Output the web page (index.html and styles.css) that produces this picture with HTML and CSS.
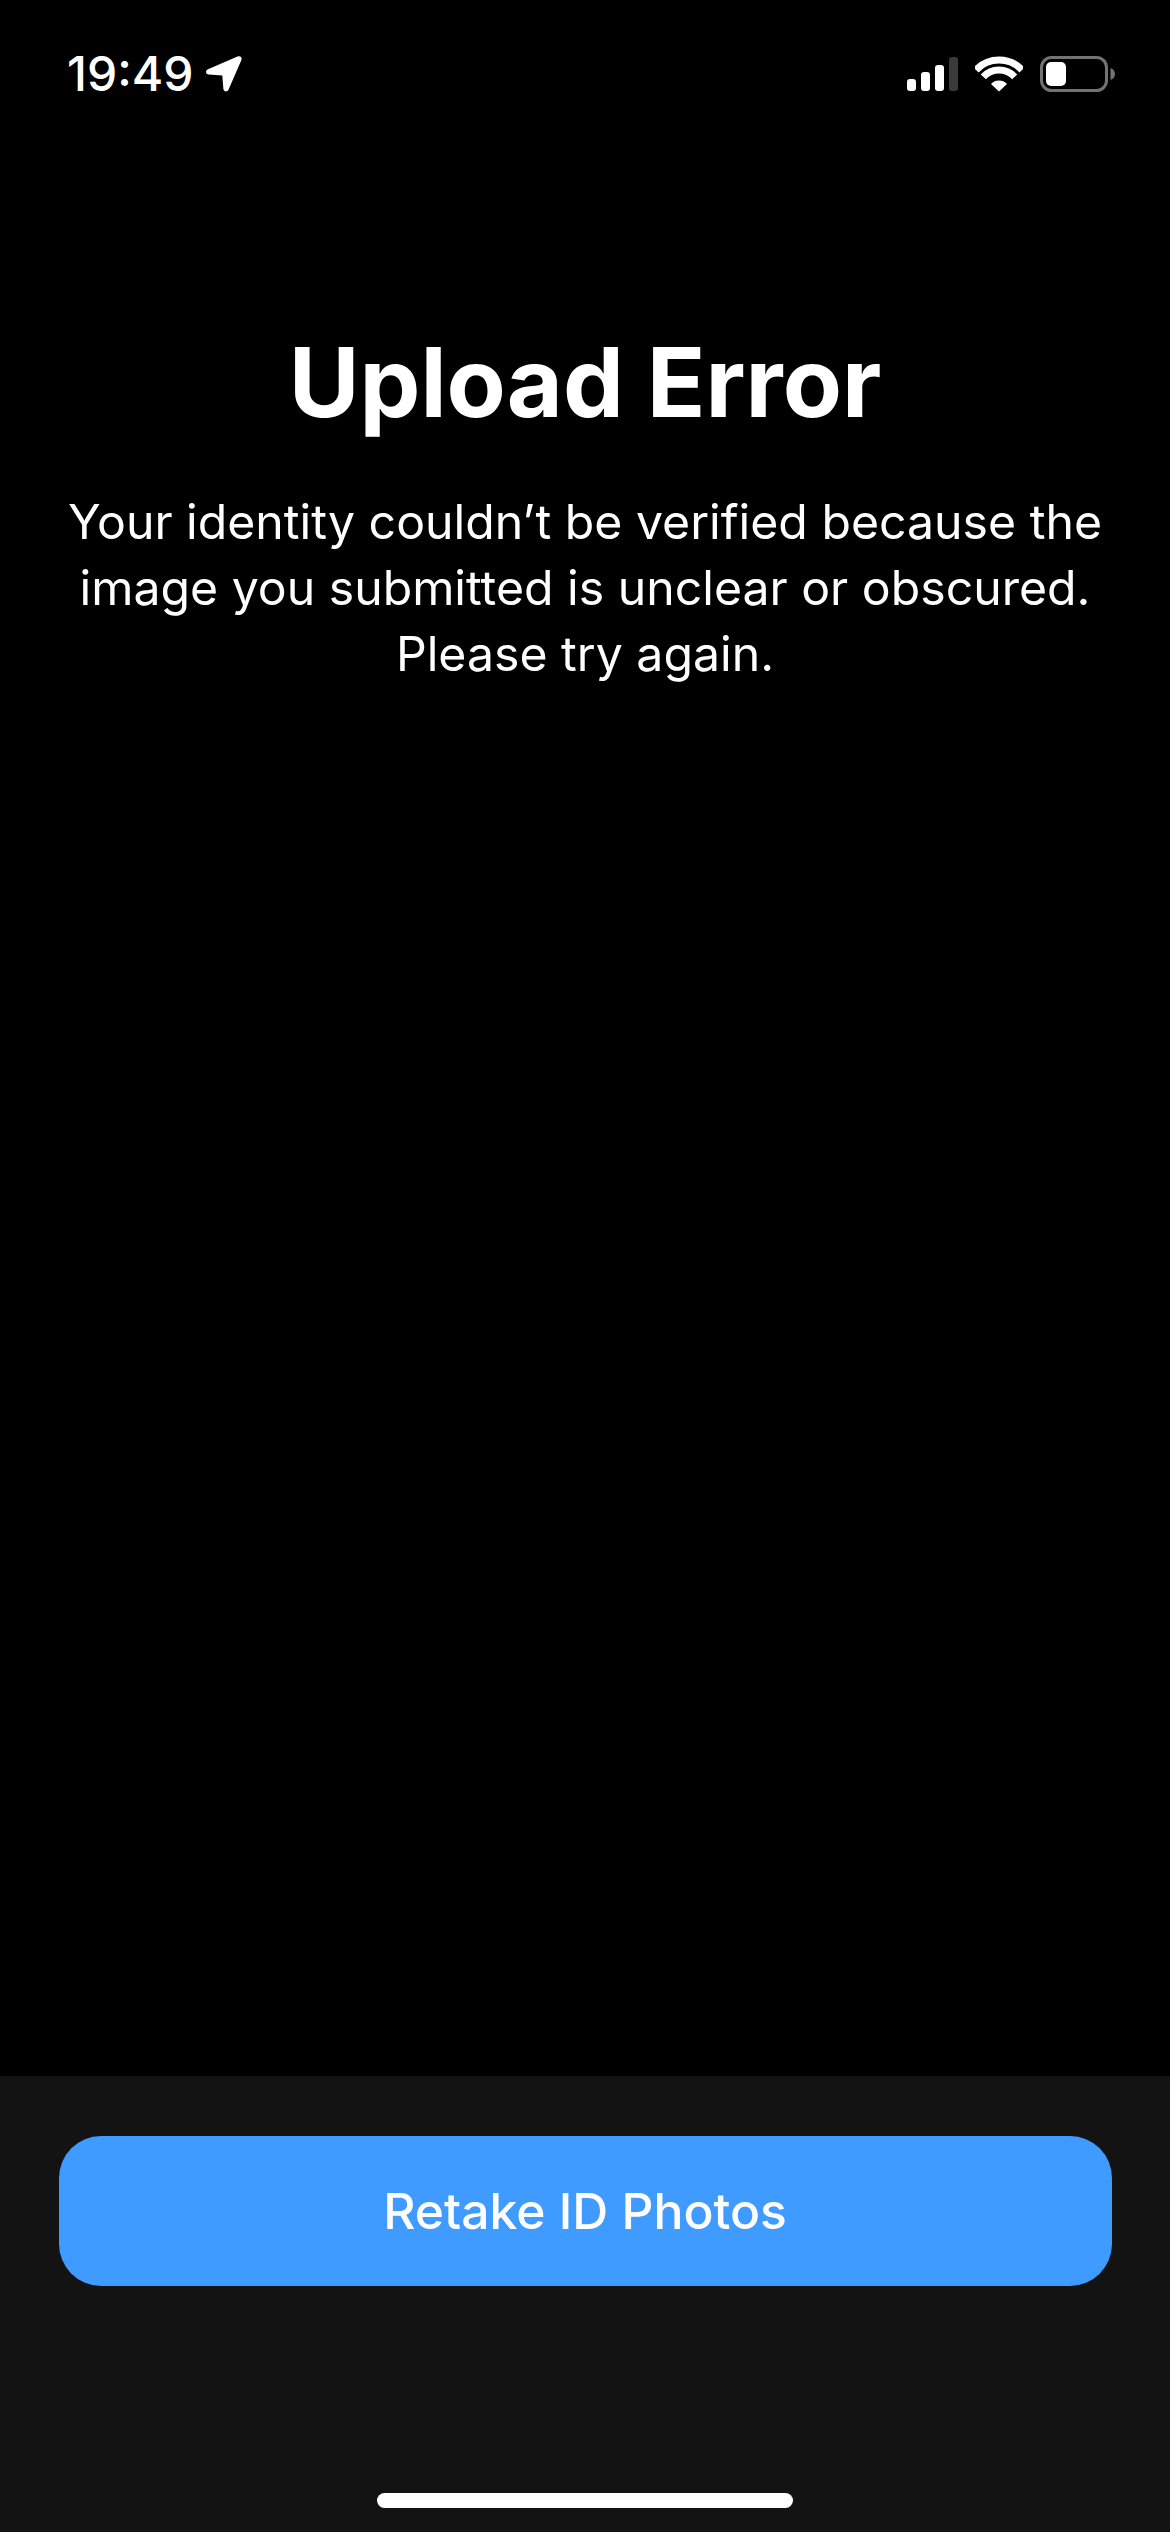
FILE: index.html
```html
<!DOCTYPE html>
<html lang="en">
<head>
<meta charset="utf-8">
<title>Upload Error</title>
<link rel="stylesheet" href="styles.css">
</head>
<body>
<div class="screen">
  <header class="status">
    <div class="status-left">
      <span class="time">19:49</span>
      <svg class="loc" viewBox="0 0 36 36" width="36" height="36"><path d="M31.500 .4C34.500-.6 36.400 1.400 35.300 4.200L22.600 33.400C21.300 36.400 17.700 35.800 17.400 33L16.300 19.600 2.800 18.600C-.4 18.300-1 14.600 2 13.300z" fill="#fff"/></svg>
    </div>
    <div class="status-right">
      <svg class="signal" viewBox="0 0 51 36" width="51" height="36">
        <rect x="0" y="23" width="9" height="12" rx="3" fill="#fff"/>
        <rect x="14" y="16" width="9" height="19" rx="3" fill="#fff"/>
        <rect x="28" y="9" width="9" height="26" rx="3" fill="#fff"/>
        <rect x="42" y="1" width="9" height="34" rx="3" fill="#3a3a3a"/>
      </svg>
      <svg class="wifi" viewBox="0 0 48 36" width="48" height="36">
        <path d="M1 14A31.500 31.500 0 0 1 47 14" fill="none" stroke="#fff" stroke-width="7"/>
        <path d="M8.300 20.800A21.500 21.500 0 0 1 39.700 20.800" fill="none" stroke="#fff" stroke-width="7"/>
        <path d="M24 35.500 16 28A11 11 0 0 1 32 28z" fill="#fff"/>
      </svg>
      <svg class="battery" viewBox="0 0 75 36" width="75" height="36">
        <rect x="1.500" y="1.500" width="65" height="33" rx="10" fill="none" stroke="#737373" stroke-width="3"/>
        <rect x="6" y="6" width="20" height="24" rx="5" fill="#fff"/>
        <path d="M70.500 12c3 1 4.500 3.500 4.500 6s-1.500 5-4.500 6z" fill="#737373"/>
      </svg>
    </div>
  </header>
  <main class="content">
    <h1 class="title">Upload Error</h1>
    <p class="message">Your identity couldn’t be verified because the image you submitted is unclear or obscured. Please try again.</p>
  </main>
  <footer class="footer">
    <button class="cta" type="button">Retake ID Photos</button>
    <div class="home-bar"></div>
  </footer>
</div>
</body>
</html>
```
FILE: styles.css
```css
* { box-sizing: border-box; }
html, body { margin: 0; padding: 0; background: #000; }
.screen {
  width: 1170px;
  height: 2532px;
  display: flex;
  flex-direction: column;
  background: #000;
  color: #fff;
  font-family: Inter, "Liberation Sans", sans-serif;
}
.status {
  height: 148px;
  padding: 56px 55px 0 67px;
  display: flex;
  justify-content: space-between;
  align-items: flex-start;
}
.status-left { display: flex; align-items: center; gap: 13px; }
.time { font-size: 48px; line-height: 36px; font-weight: 500; }
.status-right { display: flex; align-items: center; gap: 17px; }
.status-right svg, .loc { display: block; }
.content {
  flex: 1;
  padding: 0 40px;
  text-align: center;
}
.title {
  margin: 178px 0 0;
  font-size: 96.700px;
  line-height: 112px;
  font-weight: 700;
}
.message {
  margin: 51px 0 0;
  font-size: 48.200px;
  line-height: 66px;
  font-weight: 400;
}
.footer {
  height: 456px;
  background: #131313;
  padding-top: 60px;
  display: flex;
  flex-direction: column;
  align-items: center;
}
.cta {
  width: 1053px;
  height: 150px;
  border: 0;
  border-radius: 42px;
  background: #3f9bff;
  color: #fff;
  font-family: inherit;
  font-size: 49.800px;
  font-weight: 550;
}
.home-bar {
  width: 416px;
  height: 15px;
  margin-top: 207px;
  border-radius: 8px;
  background: #fff;
}
```
